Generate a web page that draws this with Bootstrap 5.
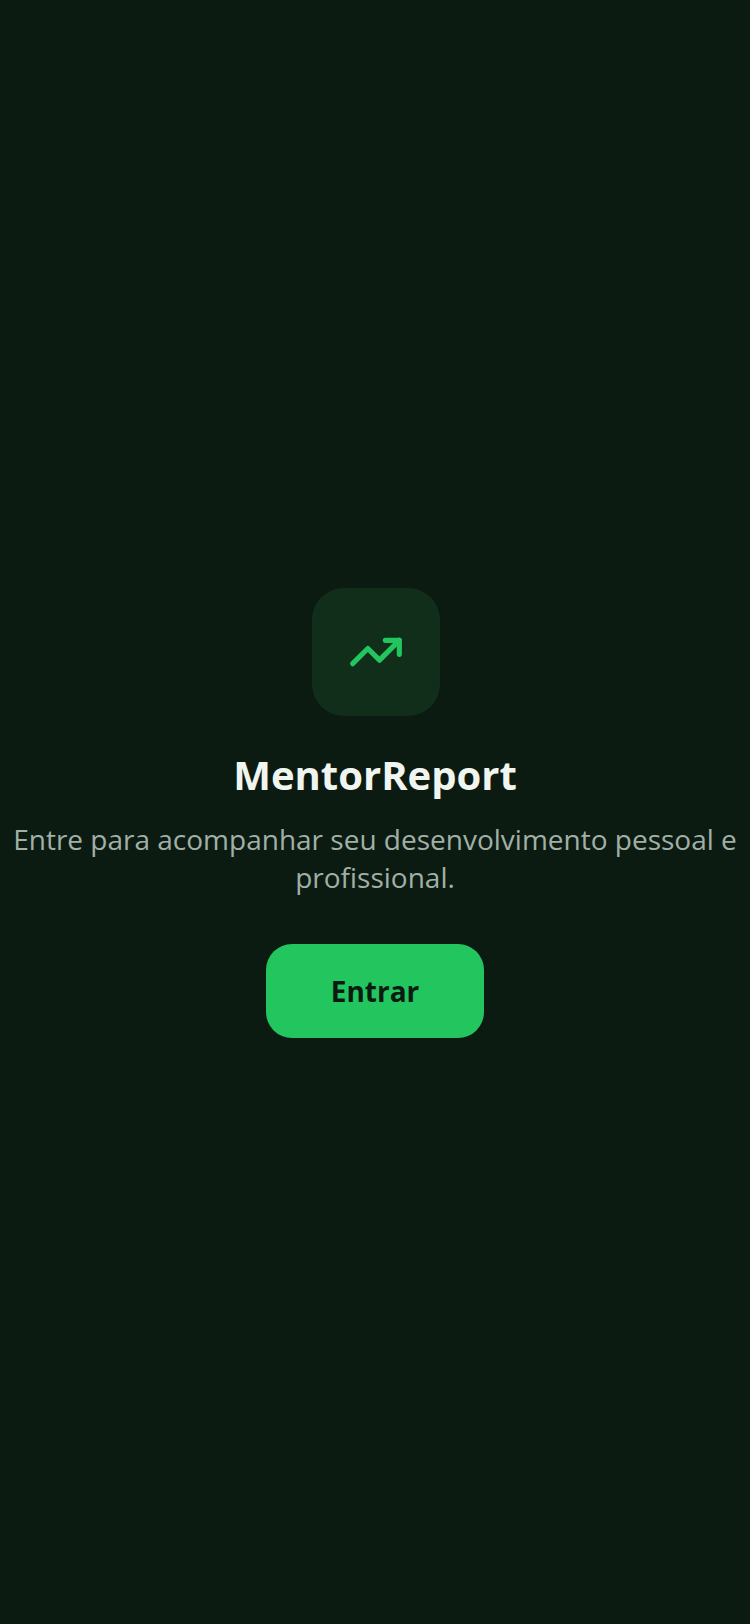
<!DOCTYPE html>
<html lang="pt-BR">
<head>
    <meta charset="UTF-8">
    <meta name="viewport" content="width=device-width, initial-scale=1.0">
    <title>MentorReport</title>
    <link href="https://cdn.jsdelivr.net/npm/bootstrap@5.3.3/dist/css/bootstrap.min.css" rel="stylesheet">
    <script src="https://cdn.jsdelivr.net/npm/bootstrap@5.3.3/dist/js/bootstrap.bundle.min.js"></script>
    <style>
        body {
            background: #0c1b12;
            font-family: "Open Sans", "Noto Sans", sans-serif;
            min-height: 100vh;
        }
        .login-wrap {
            padding-top: 2px;
        }
        .logo-box {
            width: 128px;
            height: 128px;
            margin-left: 2px;
            margin-bottom: 35px;
            background: #112e1b;
            border-radius: 32px;
        }
        .app-title {
            color: #f0f5f0;
            font-size: 40px;
            font-weight: 700;
            line-height: 48px;
            margin-bottom: 21px;
        }
        .app-text {
            color: #a1b0a6;
            font-size: 28px;
            line-height: 38px;
        }
        .btn-enter {
            width: 218px;
            height: 94px;
            background: #22c55e;
            color: #0c1b12;
            font-size: 28px;
            font-weight: 700;
            border: 0;
            border-radius: 26px;
        }
    </style>
</head>
<body>

<div class="login-wrap d-flex flex-column align-items-center justify-content-center text-center vh-100 px-2">
    <div class="logo-box d-flex align-items-center justify-content-center">
        <svg width="56" height="56" viewBox="0 0 24 24" fill="none" stroke="#22c55e" stroke-width="2.2" stroke-linecap="round" stroke-linejoin="round">
            <path d="M22 7 13.5 15.5 8.5 10.5 2 17"/>
            <path d="M16 7h6v6"/>
        </svg>
    </div>
    <h1 class="app-title">MentorReport</h1>
    <p class="app-text mb-5">Entre para acompanhar seu desenvolvimento pessoal e profissional.</p>
    <button type="button" class="btn btn-enter">Entrar</button>
</div>

</body>
</html>
